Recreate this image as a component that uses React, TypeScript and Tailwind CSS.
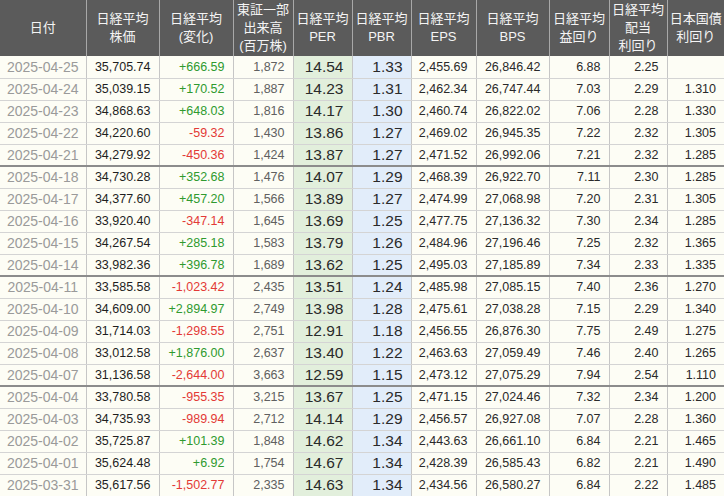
import React from 'react'

type Row = [string, string, string, string, string, string, string, string, string, string, string]

const rows: Row[] = [
  ['2025-04-25', '35,705.74', '+666.59', '1,872', '14.54', '1.33', '2,455.69', '26,846.42', '6.88', '2.25', ''],
  ['2025-04-24', '35,039.15', '+170.52', '1,887', '14.23', '1.31', '2,462.34', '26,747.44', '7.03', '2.29', '1.310'],
  ['2025-04-23', '34,868.63', '+648.03', '1,816', '14.17', '1.30', '2,460.74', '26,822.02', '7.06', '2.28', '1.330'],
  ['2025-04-22', '34,220.60', '-59.32', '1,430', '13.86', '1.27', '2,469.02', '26,945.35', '7.22', '2.32', '1.305'],
  ['2025-04-21', '34,279.92', '-450.36', '1,424', '13.87', '1.27', '2,471.52', '26,992.06', '7.21', '2.32', '1.285'],
  ['2025-04-18', '34,730.28', '+352.68', '1,476', '14.07', '1.29', '2,468.39', '26,922.70', '7.11', '2.30', '1.285'],
  ['2025-04-17', '34,377.60', '+457.20', '1,566', '13.89', '1.27', '2,474.99', '27,068.98', '7.20', '2.31', '1.305'],
  ['2025-04-16', '33,920.40', '-347.14', '1,645', '13.69', '1.25', '2,477.75', '27,136.32', '7.30', '2.34', '1.285'],
  ['2025-04-15', '34,267.54', '+285.18', '1,583', '13.79', '1.26', '2,484.96', '27,196.46', '7.25', '2.32', '1.365'],
  ['2025-04-14', '33,982.36', '+396.78', '1,689', '13.62', '1.25', '2,495.03', '27,185.89', '7.34', '2.33', '1.335'],
  ['2025-04-11', '33,585.58', '-1,023.42', '2,435', '13.51', '1.24', '2,485.98', '27,085.15', '7.40', '2.36', '1.270'],
  ['2025-04-10', '34,609.00', '+2,894.97', '2,749', '13.98', '1.28', '2,475.61', '27,038.28', '7.15', '2.29', '1.340'],
  ['2025-04-09', '31,714.03', '-1,298.55', '2,751', '12.91', '1.18', '2,456.55', '26,876.30', '7.75', '2.49', '1.275'],
  ['2025-04-08', '33,012.58', '+1,876.00', '2,637', '13.40', '1.22', '2,463.63', '27,059.49', '7.46', '2.40', '1.265'],
  ['2025-04-07', '31,136.58', '-2,644.00', '3,663', '12.59', '1.15', '2,473.12', '27,075.29', '7.94', '2.54', '1.110'],
  ['2025-04-04', '33,780.58', '-955.35', '3,215', '13.67', '1.25', '2,471.15', '27,024.46', '7.32', '2.34', '1.200'],
  ['2025-04-03', '34,735.93', '-989.94', '2,712', '14.14', '1.29', '2,456.57', '26,927.08', '7.07', '2.28', '1.360'],
  ['2025-04-02', '35,725.87', '+101.39', '1,848', '14.62', '1.34', '2,443.63', '26,661.10', '6.84', '2.21', '1.465'],
  ['2025-04-01', '35,624.48', '+6.92', '1,754', '14.67', '1.34', '2,428.39', '26,585.43', '6.82', '2.21', '1.490'],
  ['2025-03-31', '35,617.56', '-1,502.77', '2,335', '14.63', '1.34', '2,434.56', '26,580.27', '6.84', '2.22', '1.485'],
]

const weekEnds = ['2025-04-21', '2025-04-14', '2025-04-07']

const headers = [
  ['日付'],
  ['日経平均', '株価'],
  ['日経平均', '(変化)'],
  ['東証一部', '出来高', '(百万株)'],
  ['日経平均', 'PER'],
  ['日経平均', 'PBR'],
  ['日経平均', 'EPS'],
  ['日経平均', 'BPS'],
  ['日経平均', '益回り'],
  ['日経平均', '配当', '利回り'],
  ['日本国債', '利回り'],
]

const widths = [86, 73, 74, 60, 59, 59, 65, 73, 60, 58, 57]

export default function App() {
  return (
    <div
      className="w-[724px] h-[496px] overflow-hidden bg-white"
      style={{ fontFamily: '"Liberation Sans", "Noto Sans CJK JP", sans-serif' }}
    >
      <table className="table-fixed border-collapse w-[724px]">
        <colgroup>
          {widths.map((w, i) => (
            <col key={i} style={{ width: w }} />
          ))}
        </colgroup>
        <thead>
          <tr className="h-[56px] bg-[#5b5b5b]">
            {headers.map((lines, i) => (
              <th
                key={i}
                className="border-r border-[#a8a8a8] last:border-r-0 p-0 text-[13px] font-normal leading-[18px] text-[#f4f4f4] text-center align-middle"
              >
                {lines.map((l, j) => (
                  <div key={j}>{l}</div>
                ))}
              </th>
            ))}
          </tr>
        </thead>
        <tbody>
          {rows.map((r) => {
            const sep = weekEnds.includes(r[0])
            const rowBorder = sep ? 'border-b-2 border-b-[#8c8c8c]' : 'border-b border-b-[#d4d4d4]'
            const cell = `border-r border-r-[#c6c6c6] ${rowBorder} h-[22px] py-0 leading-[18px] text-right pr-2 whitespace-nowrap align-middle`
            const up = r[2].startsWith('+')
            return (
              <tr key={r[0]} className="h-[22px] bg-[#fdfdf5]">
                <td className={`${cell} !text-center !pr-0 text-[14px] text-[#9a9a9a]`}>{r[0]}</td>
                <td className={`${cell} text-[12.5px] text-[#1e1e1e]`}>{r[1]}</td>
                <td className={`${cell} text-[12.5px] ${up ? 'text-[#2f9a2f]' : 'text-[#e33a36]'}`}>{r[2]}</td>
                <td className={`${cell} text-[12.5px] text-[#606060]`}>{r[3]}</td>
                <td className={`${cell} bg-[#e2efdc] text-[15.5px] text-[#2a2a2a]`}>{r[4]}</td>
                <td className={`${cell} bg-[#e2edfa] text-[15.5px] text-[#2a2a2a]`}>{r[5]}</td>
                <td className={`${cell} text-[12.5px] text-[#2a2a2a]`}>{r[6]}</td>
                <td className={`${cell} text-[12.5px] text-[#2a2a2a]`}>{r[7]}</td>
                <td className={`${cell} text-[12.5px] text-[#2a2a2a]`}>{r[8]}</td>
                <td className={`${cell} text-[12.5px] text-[#2a2a2a]`}>{r[9]}</td>
                <td className={`${cell} border-r-0 text-[12.5px] text-[#2a2a2a]`}>{r[10]}</td>
              </tr>
            )
          })}
        </tbody>
      </table>
    </div>
  )
}
